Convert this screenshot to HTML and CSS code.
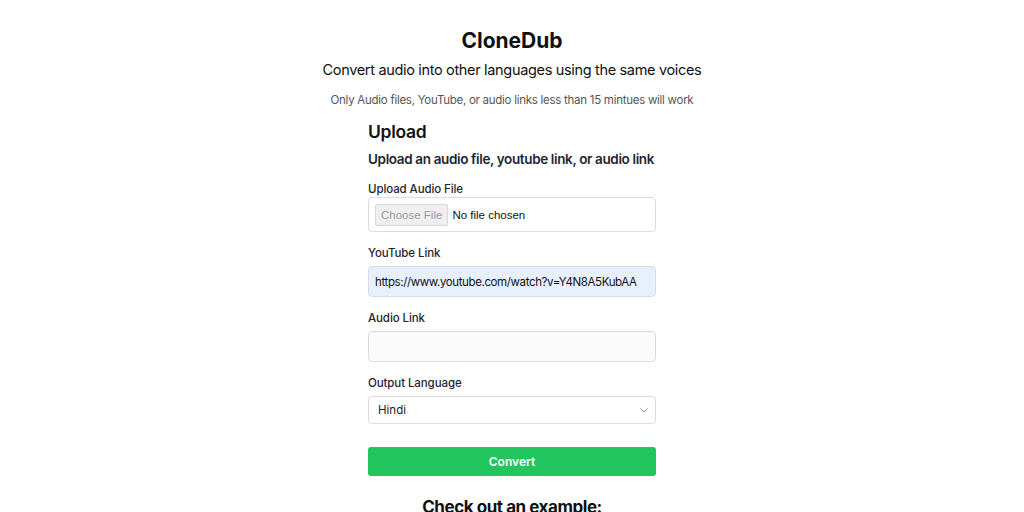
FILE: index.html
```html
<!DOCTYPE html>
<html lang="en">
<head>
<meta charset="utf-8">
<title>CloneDub</title>
<link rel="stylesheet" href="styles.css">
</head>
<body>
<main class="page">
  <header class="hero">
    <h1 class="title">CloneDub</h1>
    <p class="subtitle">Convert audio into other languages using the same voices</p>
    <p class="note">Only Audio files, YouTube, or audio links less than 15 mintues will work</p>
  </header>
  <section class="card">
    <h2 class="card-title">Upload</h2>
    <h3 class="card-sub">Upload an audio file, youtube link, or audio link</h3>
    <div class="field field-file">
      <label class="label">Upload Audio File</label>
      <div class="box file-box"><span class="file-btn">Choose File</span><span class="file-name">No file chosen</span></div>
    </div>
    <div class="field">
      <label class="label">YouTube Link</label>
      <div class="box text-box filled">https://www.youtube.com/watch?v=Y4N8A5KubAA</div>
    </div>
    <div class="field">
      <label class="label">Audio Link</label>
      <div class="box text-box empty"></div>
    </div>
    <div class="field">
      <label class="label">Output Language</label>
      <div class="box select-box"><span>Hindi</span>
        <svg class="chev" width="8" height="5" viewBox="0 0 8 5"><path d="M0.5 0.5 L4 4 L7.5 0.5" fill="none" stroke="#888" stroke-width="1"/></svg>
      </div>
    </div>
    <button class="convert">Convert</button>
  </section>
  <h2 class="example">Check out an example:</h2>
</main>
</body>
</html>
```

FILE: styles.css
```css
* { box-sizing: border-box; }
html, body { margin: 0; padding: 0; background: #fff; }
body {
  font-family: Inter, "Liberation Sans", Arial, sans-serif;
  color: #111;
  overflow: hidden;
  height: 512px;
}
.page {
  display: flex;
  flex-direction: column;
  align-items: center;
  padding-top: 28px;
}
.hero { text-align: center; white-space: nowrap; }
.title {
  margin: 0;
  font-size: 21px;
  font-weight: 700;
  line-height: 26px;
  color: #111;
}
.subtitle {
  margin: 5px 0 0;
  font-size: 14.5px;
  line-height: 22px;
  letter-spacing: -0.33px;
  color: #111;
}
.note {
  margin: 11px 0 0;
  font-size: 11.5px;
  line-height: 16px;
  letter-spacing: -0.27px;
  color: #555;
}
.card {
  width: 288px;
  padding-top: 13px;
}
.card-title {
  margin: 0;
  font-size: 17.5px;
  font-weight: 600;
  line-height: 22px;
  letter-spacing: -0.3px;
  color: #111;
}
.card-sub {
  margin: 7px 0 0;
  font-size: 13.5px;
  font-weight: 600;
  line-height: 18px;
  letter-spacing: -0.36px;
  white-space: nowrap;
  color: #1f2430;
}
.field { margin-top: 14px; }
.label {
  display: block;
  font-size: 11.5px;
  font-weight: 500;
  line-height: 14px;
  letter-spacing: -0.1px;
  color: #1f2430;
  margin-bottom: 6px;
}
.field-file .label { margin-bottom: 1px; }
.box {
  border: 1px solid #dcdcdc;
  border-radius: 4px;
  display: flex;
  align-items: center;
  font-size: 11.5px;
}
.file-box {
  height: 35px;
  padding: 0 6px;
  background: #fff;
}
.file-btn {
  background: #efefef;
  border: 1px solid #d8d8d8;
  border-radius: 2px;
  color: #9a9a9a;
  padding: 3px 5px;
  line-height: 14px;
  font-family: "Liberation Sans", Arial, sans-serif;
  font-size: 11.5px;
}
.file-name {
  margin-left: 4px;
  color: #111;
  font-family: "Liberation Sans", Arial, sans-serif;
}
.text-box {
  height: 31px;
  padding: 0 6px;
  white-space: nowrap;
  overflow: hidden;
}
.filled {
  background: #e8f0fe;
  border-color: #d6dde8;
  color: #111;
  letter-spacing: -0.38px;
}
.empty { background: #fafafa; }
.select-box {
  height: 28px;
  padding: 0 9px;
  justify-content: space-between;
  background: #fff;
  color: #222;
}
.chev { margin-right: -2px; }
.convert {
  display: block;
  width: 100%;
  margin-top: 23px;
  height: 29px;
  border: none;
  border-radius: 3px;
  background: #22c55e;
  color: #fff;
  font-family: inherit;
  font-size: 12px;
  font-weight: 600;
}
.example {
  margin: 19px 0 0;
  font-size: 17px;
  font-weight: 700;
  line-height: 24px;
  letter-spacing: -0.45px;
  color: #111;
  text-align: center;
  white-space: nowrap;
}
```
